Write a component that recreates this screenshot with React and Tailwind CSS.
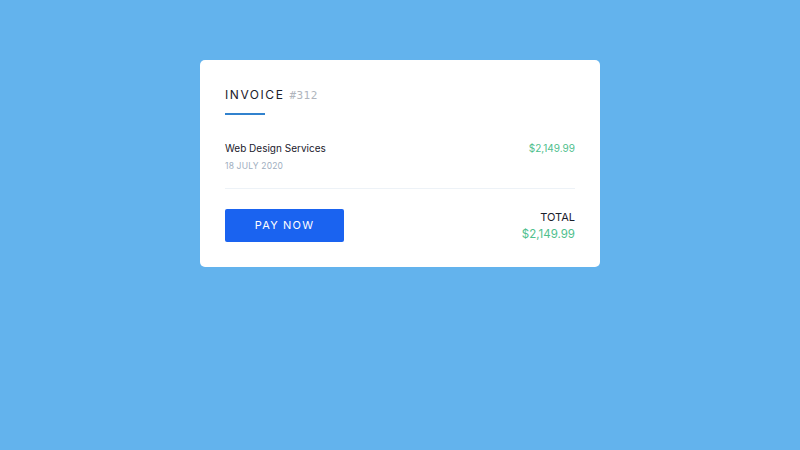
export default function App() {
  return (
    <div
      className="w-[800px] h-[450px] bg-[#63b3ed] flex justify-center items-start pt-[60px]"
      style={{ fontFamily: "Inter, 'Noto Sans', sans-serif" }}
    >
      <div className="w-[400px] bg-white rounded-[5px] px-[25px] pt-[29px] pb-[25px]">
        <div className="flex items-baseline gap-[5px]">
          <h1 className="text-[12px] tracking-[0.13em] text-[#1a202c] leading-none">INVOICE</h1>
          <span
            className="text-[11px] tracking-[0.04em] text-[#b0b5bd] leading-none"
            style={{ fontFamily: "'DejaVu Sans Mono', monospace" }}
          >
            #312
          </span>
        </div>
        <div className="w-[40px] h-[2px] bg-[#3182ce] mt-[12px]"></div>

        <div className="flex justify-between mt-[28px]">
          <div>
            <p className="text-[10px] text-[#1a202c] leading-none">Web Design Services</p>
            <p className="text-[8.5px] text-[#a0aec0] mt-[9px] leading-none tracking-[0.02em]">18 JULY 2020</p>
          </div>
          <p className="text-[10px] text-[#4fc08d] leading-none">$2,149.99</p>
        </div>

        <div className="h-px bg-[#edf2f7] mt-[17px]"></div>

        <div className="flex justify-between items-center mt-[20px]">
          <button className="w-[119px] h-[33px] bg-[#1a63f0] rounded-[2px] text-white text-[11px] tracking-[0.11em]">
            PAY NOW
          </button>
          <div className="text-right pt-[2px]">
            <p className="text-[11px] text-[#1a202c] leading-none">TOTAL</p>
            <p className="text-[11.5px] text-[#4fc08d] mt-[6px] leading-none">$2,149.99</p>
          </div>
        </div>
      </div>
    </div>
  );
}
